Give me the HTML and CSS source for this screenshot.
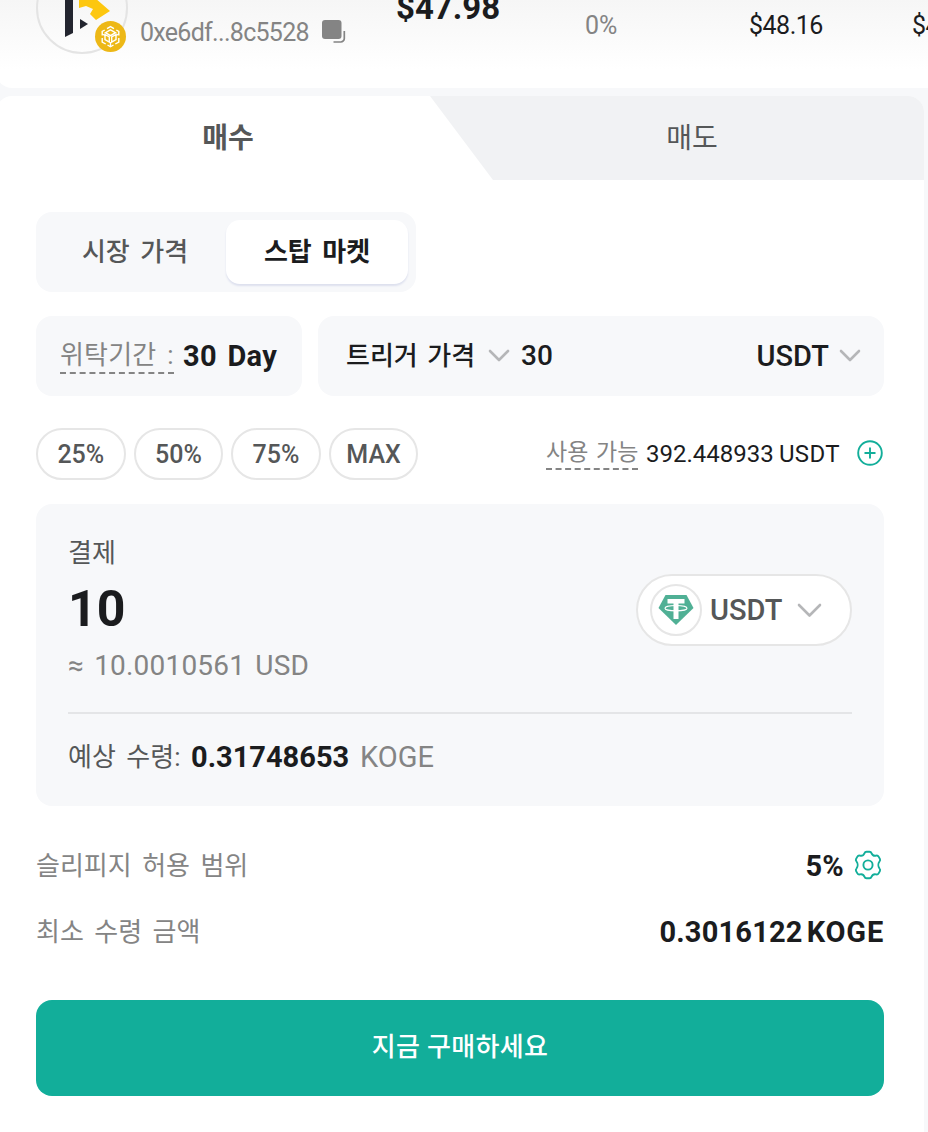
FILE: index.html
```
<!DOCTYPE html>
<html lang="ko">
<head>
    <meta charset="UTF-8">
    <title>KOGE</title>
    <link rel="stylesheet" href="styles.css">
</head>
<body>
    <header class="token-header">
        <div class="token-logo">
            <svg class="logo-mark" width="88" height="88" viewBox="0 0 88 88">
                <path d="M27 20h8v49l-8 4z" fill="#23252f"/>
                <path d="M41 26l16 8 15 13-14 9-6-6 3-5-7-3-7 2z" fill="#fdc70f"/>
                <path d="M42 55l8 5-8 5z" fill="#23252f"/>
            </svg>
            <svg class="chain-badge" width="31" height="31" viewBox="0 0 31 31" fill="none" stroke="#fff" stroke-width="1.4">
                <circle cx="15.5" cy="15.5" r="15.5" fill="#edb817" stroke="none"/>
                <path d="M12 7.6l3.5-2 3.5 2M21.3 9l2.5 1.500v4M23.8 17v4l-3.500 2M18.5 24l-3 1.800-3-1.800M10.700 23l-3.500-2v-4M7.2 14.5v-4L9.7 9"/>
                <path d="M15.5 8.8l5 2.900-5 2.900-5-2.900zM10 13.5l4.300 2.500v5L10 18.5zM21 13.5L16.7 16v5l4.300-2.500zM7.2 13l2.800 1.500M23.8 13L21 14.5M15.5 21v4.500"/>
            </svg>
        </div>
        <div class="token-address">0xe6df...8c5528</div>
        <svg class="copy-icon" width="24" height="24" viewBox="0 0 24 24">
            <rect x="0" y="0" width="19.5" height="19" rx="3" fill="#848484"/>
            <path d="M22.3 11v7.500a3.500 3.500 0 0 1-3.500 3.500H11.5" fill="none" stroke="#848484" stroke-width="1.7"/>
        </svg>
        <div class="token-price">$47.98</div>
        <div class="token-change">0%</div>
        <div class="token-stat">$48.16</div>
        <div class="token-stat last">$4</div>
    </header>

    <main class="trade-panel">
        <div class="tabs">
            <div class="tab buy">매수</div>
            <div class="tab sell">매도</div>
        </div>

        <div class="trade-form">
            <div class="order-types">
                <div class="order-type">시장 가격</div>
                <div class="order-type active">스탑 마켓</div>
            </div>

            <div class="order-options">
                <div class="option-box period">
                    <span class="hint">위탁기간 :</span>
                    <span class="period-value">30 Day</span>
                </div>
                <div class="option-box trigger">
                    <span class="trigger-label">트리거 가격</span>
                    <svg class="chevron" width="22" height="14" viewBox="0 0 22 14"><path d="M2 2l9 9 9-9"/></svg>
                    <span class="trigger-price">30</span>
                    <span class="trigger-unit">USDT</span>
                    <svg class="chevron" width="22" height="14" viewBox="0 0 22 14"><path d="M2 2l9 9 9-9"/></svg>
                </div>
            </div>

            <div class="amount-row">
                <div class="percents">
                    <div class="percent">25%</div>
                    <div class="percent">50%</div>
                    <div class="percent">75%</div>
                    <div class="percent">MAX</div>
                </div>
                <div class="available">
                    <span class="hint">사용 가능</span>
                    <span class="balance">392.448933</span>
                    <span class="balance-unit">USDT</span>
                    <svg width="28" height="28" viewBox="0 0 28 28" fill="none" stroke="#12ae9a" stroke-width="1.9">
                        <circle cx="14" cy="14" r="11.8"/>
                        <path d="M14 8.500v11M8.500 14h11"/>
                    </svg>
                </div>
            </div>

            <div class="pay-card">
                <div class="pay-main">
                    <div class="pay-left">
                        <div class="pay-label">결제</div>
                        <div class="pay-amount">10</div>
                        <div class="pay-usd">≈ <span>10.0010561 USD</span></div>
                    </div>
                    <div class="coin-select">
                        <div class="coin-icon">
                            <svg width="36" height="32" viewBox="0 0 36 32">
                                <path d="M7.500 1h21L35.500 14 18 31 .5 14z" fill="#50b095"/>
                                <path d="M9.500 5h17v4.500h-6V25h-5V9.500h-6z" fill="#fff"/>
                                <ellipse cx="18" cy="14.2" rx="11" ry="2.7" fill="none" stroke="#fff" stroke-width="1.1"/>
                            </svg>
                        </div>
                        <span>USDT</span>
                        <svg class="chevron" width="25" height="15" viewBox="0 0 25 15"><path d="M2 2l10.500 10.500L23 2"/></svg>
                    </div>
                </div>
                <div class="receive">
                    <span class="receive-label">예상 수령:</span>
                    <span class="receive-value">0.31748653</span>
                    <span class="receive-unit">KOGE</span>
                </div>
            </div>

            <div class="detail">
                <span class="detail-label">슬리피지 허용 범위</span>
                <span class="detail-value slippage">5%</span>
                <svg class="gear" width="28" height="30" viewBox="0 0 28 30" fill="none" stroke="#12ae9a" stroke-width="1.9">
                    <path d="M10.400 3.300Q11 1.700 12.500 1.700h3Q17 1.700 17.600 3.300C18.400 5.300 20 6.100 22.100 5.600Q23.800 5.200 24.600 6.600L25.900 8.900Q26.600 10.200 25.500 11.500C24 13.400 24 16.600 25.500 18.500Q26.600 19.800 25.900 21.100L24.600 23.400Q23.800 24.800 22.100 24.400C20 23.900 18.400 24.700 17.600 26.700Q17 28.300 15.500 28.300h-3Q11 28.300 10.400 26.700C9.600 24.700 8 23.900 5.900 24.400Q4.200 24.800 3.400 23.400L2.100 21.100Q1.400 19.800 2.500 18.500C4 16.600 4 13.400 2.500 11.500Q1.400 10.200 2.100 8.900L3.400 6.600Q4.200 5.200 5.900 5.600C8 6.100 9.600 5.300 10.400 3.300z"/>
                    <circle cx="14" cy="15" r="4.6"/>
                </svg>
            </div>
            <div class="detail">
                <span class="detail-label">최소 수령 금액</span>
                <span class="detail-value minimum">0.3016122</span>
                <span class="detail-unit">KOGE</span>
            </div>

            <button class="buy-button">지금 구매하세요</button>
        </div>
    </main>
</body>
</html>
```
FILE: styles.css
```
* {
    box-sizing: border-box;
}

body {
    margin: 0;
    width: 928px;
    height: 1132px;
    overflow: hidden;
    background: #f7f8fa;
    color: #1b1c1e;
    font-family: Roboto, "Noto Sans CJK KR", sans-serif;
    font-size: 26px;
    line-height: 40px;
    white-space: nowrap;
}

/* token header */
.token-header {
    display: flex;
    height: 88px;
    margin-left: -4px;
    padding-left: 40px;
    overflow: hidden;
    background: linear-gradient(#f6f6f6, #fff 70px);
    border-bottom-left-radius: 16px;
}

.token-logo {
    position: relative;
    flex: none;
    width: 92px;
    height: 92px;
    margin-top: -38px;
    border: 2px solid #e4e4e4;
    border-radius: 50%;
}

.chain-badge {
    position: absolute;
    left: 57px;
    top: 57px;
}

.token-address {
    flex: none;
    width: 194px;
    padding: 13px 0 0 12px;
    color: #848484;
    font-size: 25px;
    letter-spacing: -0.7px;
}

.copy-icon {
    flex: none;
    margin-top: 20px;
}

.token-price {
    flex: none;
    width: 189px;
    margin: -12px 0 0 50px;
    font-size: 33px;
    font-weight: 700;
}

.token-change {
    flex: none;
    width: 164px;
    padding-top: 6px;
    color: #848484;
    font-size: 25px;
}

.token-stat {
    flex: none;
    width: 163px;
    padding-top: 6px;
    font-size: 25px;
    letter-spacing: -0.5px;
}

/* trade panel */
.trade-panel {
    width: 928px;
    height: 1036px;
    margin: 8px 0 0 -4px;
    overflow: hidden;
    background: #fff;
    border-radius: 16px 16px 0 0;
}

.tabs {
    display: flex;
    height: 84px;
}

.tab {
    width: 464px;
    color: #555758;
    font-size: 28px;
    line-height: 85px;
    text-align: center;
}

.buy {
    font-weight: 700;
}

.sell {
    width: 494px;
    margin-left: -30px;
    padding-left: 30px;
    background: #f1f2f4;
    clip-path: polygon(0 0, 100% 0, 100% 100%, 63px 100%);
}

.trade-form {
    padding: 32px 40px 0;
}

.order-types {
    display: flex;
    width: 380px;
    height: 80px;
    padding: 8px;
    background: #f7f8fa;
    border-radius: 16px;
}

.order-type {
    width: 182px;
    border-radius: 14px;
    color: #555758;
    font-weight: 500;
    line-height: 64px;
    text-align: center;
    word-spacing: 4px;
}

.order-type.active {
    background: #fff;
    box-shadow: 0 2px 2px #dde0ee;
    color: #1b1c1e;
    font-weight: 700;
}

.order-options {
    display: flex;
    gap: 16px;
    margin-top: 24px;
}

.option-box {
    display: flex;
    align-items: center;
    height: 80px;
    background: #f7f8fa;
    border-radius: 16px;
}

.period {
    width: 266px;
    padding-left: 24px;
}

.hint {
    height: 38px;
    color: #848484;
    line-height: 38px;
    word-spacing: 4px;
    border-bottom: 2px dashed #848484;
}

.period .hint {
    width: 114px;
    margin-top: -2px;
    letter-spacing: 0.2px;
}

.period-value {
    margin: -1px 0 0 9px;
    font-size: 29px;
    font-weight: 700;
    letter-spacing: 0.3px;
    word-spacing: 3px;
}

.trigger {
    flex: 1;
    padding: 0 23px 0 28px;
}

.trigger-label {
    width: 142px;
    font-weight: 500;
    word-spacing: 3px;
}

.chevron {
    flex: none;
    fill: none;
    stroke: #b5b6b8;
    stroke-width: 2.6;
    stroke-linecap: round;
    stroke-linejoin: round;
}

.trigger-price {
    margin-left: 11px;
    font-size: 28px;
    font-weight: 500;
}

.trigger-unit {
    margin: 0 10px 0 auto;
    font-size: 29px;
    font-weight: 500;
}

.amount-row {
    display: flex;
    justify-content: space-between;
    margin-top: 32px;
}

.percents {
    display: flex;
    gap: 8px;
}

.percent {
    width: 89.6px;
    height: 52px;
    border: 2px solid #e6e6e6;
    border-radius: 26px;
    color: #555758;
    font-size: 25px;
    font-weight: 500;
    line-height: 49px;
    text-align: center;
}

.available {
    display: flex;
    align-items: center;
    height: 50px;
    font-size: 24px;
}

.available .hint {
    width: 92px;
    margin-top: -4px;
    font-size: 23px;
    word-spacing: 2px;
    line-height: 42px;
}

.balance {
    width: 133px;
    margin: 1px 0 0 8px;
}

.balance-unit {
    width: 77px;
    margin-top: 1px;
    letter-spacing: 0.3px;
}

/* payment card */
.pay-card {
    height: 302px;
    margin-top: 24px;
    padding: 0 32px;
    background: #f7f8fa;
    border-radius: 16px;
}

.pay-main {
    display: flex;
    align-items: center;
    justify-content: space-between;
    height: 210px;
    padding-top: 4px;
    border-bottom: 2px solid #e4e5e7;
}

.pay-left {
    height: 154px;
}

.pay-label {
    color: #555758;
}

.pay-amount {
    font-size: 50px;
    font-weight: 700;
    line-height: 73px;
}

.pay-usd {
    color: #848484;
    font-size: 28px;
    letter-spacing: 0.2px;
    word-spacing: 3px;
}

.coin-select {
    display: flex;
    align-items: center;
    width: 216px;
    height: 72px;
    padding-left: 12px;
    background: #fff;
    border: 2px solid #e6e6e6;
    border-radius: 36px;
    color: #555758;
    font-size: 29px;
    font-weight: 500;
}

.coin-icon {
    display: flex;
    align-items: center;
    justify-content: center;
    width: 52px;
    height: 52px;
    border: 2px solid #e6e6e6;
    border-radius: 50%;
}

.coin-select span {
    width: 87px;
    margin-left: 8px;
}

.receive {
    display: flex;
    height: 88px;
    line-height: 86px;
}

.receive-label {
    width: 123px;
    color: #555758;
    word-spacing: 4px;
}

.receive-value {
    width: 169px;
    font-size: 29px;
    font-weight: 700;
}

.receive-unit {
    color: #848484;
    font-size: 29px;
}

/* details */
.detail {
    display: flex;
    align-items: center;
    height: 66px;
}

.pay-card + .detail {
    margin-top: 26px;
}

.detail-label {
    margin-top: 2px;
    color: #848484;
    word-spacing: 4px;
}

.detail-value {
    margin: 2px 0 0 auto;
    font-size: 29px;
    font-weight: 700;
}

.slippage,
.minimum {
    letter-spacing: 0.2px;
}

.gear {
    margin: 0 2px 0 10px;
}

.detail-unit {
    margin: 2px 0 0 4px;
    font-size: 29px;
    font-weight: 700;
    letter-spacing: 0.8px;
}

.buy-button {
    display: block;
    width: 848px;
    height: 96px;
    margin-top: 36px;
    padding: 0 0 7px;
    background: #12ae9a;
    border: none;
    border-radius: 16px;
    color: #fff;
    font-family: inherit;
    font-size: 26px;
    font-weight: 500;
    letter-spacing: 0.3px;
}
```
